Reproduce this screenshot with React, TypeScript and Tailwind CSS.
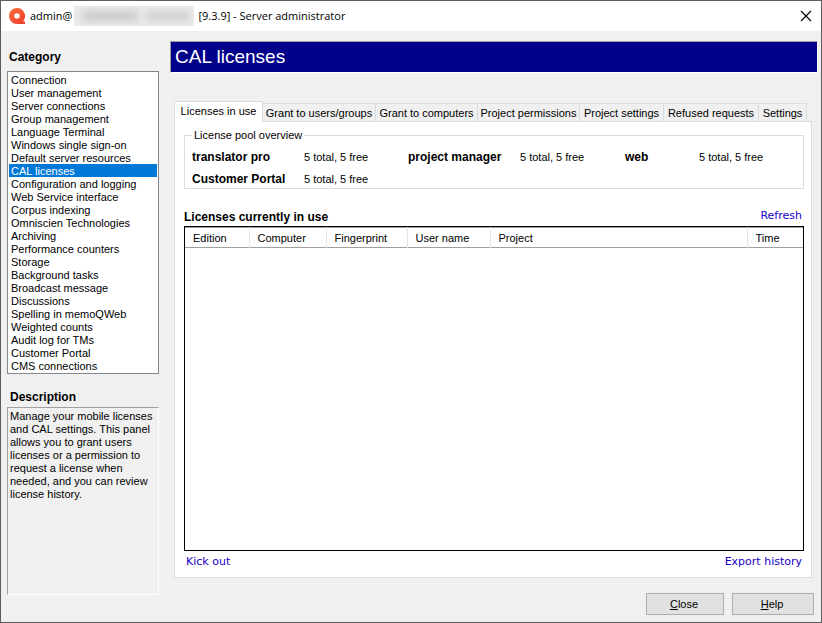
import { useState } from "react";

const CATEGORIES = [
  "Connection",
  "User management",
  "Server connections",
  "Group management",
  "Language Terminal",
  "Windows single sign-on",
  "Default server resources",
  "CAL licenses",
  "Configuration and logging",
  "Web Service interface",
  "Corpus indexing",
  "Omniscien Technologies",
  "Archiving",
  "Performance counters",
  "Storage",
  "Background tasks",
  "Broadcast message",
  "Discussions",
  "Spelling in memoQWeb",
  "Weighted counts",
  "Audit log for TMs",
  "Customer Portal",
  "CMS connections",
];

// width of each tab header
const TABS = [
  { label: "Licenses in use", width: "w-[89px]" },
  { label: "Grant to users/groups", width: "w-[113px]" },
  { label: "Grant to computers", width: "w-[102px]" },
  { label: "Project permissions", width: "w-[102px]" },
  { label: "Project settings", width: "w-[84px]" },
  { label: "Refused requests", width: "w-[95px]" },
  { label: "Settings", width: "w-[48px]" },
];

const COLUMNS = [
  { label: "Edition", width: "w-16" },
  { label: "Computer", width: "w-[77px]" },
  { label: "Fingerprint", width: "w-[81px]" },
  { label: "User name", width: "w-[83px]" },
  { label: "Project", width: "" },
  { label: "Time", width: "w-14" },
];

const POOL = [
  { name: "translator pro", usage: "5 total, 5 free" },
  { name: "project manager", usage: "5 total, 5 free" },
  { name: "web", usage: "5 total, 5 free" },
  { name: "Customer Portal", usage: "5 total, 5 free" },
];

function Logo() {
  return (
    <svg viewBox="0 0 16 16" className="size-4 shrink-0" aria-hidden="true">
      <defs>
        <linearGradient id="logo" x1="0" y1="0" x2="1" y2="1">
          <stop offset="0" stopColor="#f9703a" />
          <stop offset="1" stopColor="#ee3b2c" />
        </linearGradient>
      </defs>
      <path
        fill="url(#logo)"
        fillRule="evenodd"
        d="M8 0a8 8 0 1 0 0 16h8v-2.6h-2.1A8 8 0 0 0 8 0Zm0 5.2a2.7 2.7 0 1 1 0 5.4 2.7 2.7 0 0 1 0-5.4Z"
      />
    </svg>
  );
}

function TitleBar() {
  return (
    <header className="flex h-[30px] shrink-0 items-center bg-white pr-2 pl-2">
      <Logo />
      <h1 className="ml-[5px] flex items-center font-['Open_Sans','Noto_Sans',sans-serif] text-[11px] leading-4 whitespace-pre">
        admin@
        <span className="ml-0.5 flex h-5 w-[120px] items-center overflow-hidden bg-[#ececec]">
          <span className="ml-2 h-2.5 w-14 bg-[#c8c8c8] blur-[4px]" />
          <span className="ml-2 h-2.5 w-11 bg-[#cfcfcf] blur-[4px]" />
        </span>
        <span className="ml-1">[9.3.9] - Server administrator</span>
      </h1>
      <button type="button" aria-label="Close window" className="mr-px ml-auto">
        <svg viewBox="0 0 12 12" className="size-3" fill="none" stroke="#000" strokeWidth="1.1">
          <path d="M1 1l10 10M11 1L1 11" />
        </svg>
      </button>
    </header>
  );
}

function Sidebar({ current, onSelect }: { current: string; onSelect: (c: string) => void }) {
  return (
    <aside className="flex w-[152px] shrink-0 flex-col">
      <h2 id="category" className="mt-[18px] ml-0.5 text-xs leading-4 font-bold">
        Category
      </h2>
      <ul
        role="listbox"
        aria-labelledby="category"
        className="mt-1.5 border border-[#828790] bg-white p-px"
      >
        {CATEGORIES.map((c) => (
          <li key={c} role="option" aria-selected={c === current}>
            <button
              type="button"
              onClick={() => onSelect(c)}
              className={[
                "block h-[13px] w-full pt-0.5 pl-0.5 text-left leading-[11px] whitespace-nowrap",
                c === current ? "bg-[#0078d7] text-white" : "",
              ].join(" ")}
            >
              {c}
            </button>
          </li>
        ))}
      </ul>
      <h2 className="mt-[15px] ml-[3px] text-xs leading-4 font-bold">Description</h2>
      <p className="mt-0.5 flex-1 border border-t-[#a0a0a0] border-r-white border-b-white border-l-[#a0a0a0] px-0.5 pt-0.5">
        Manage your mobile licenses and CAL settings. This panel allows you to grant users licenses
        or a permission to request a license when needed, and you can review license history.
      </p>
    </aside>
  );
}

function LinkText({ children }: { children: string }) {
  return (
    <a href="#" className="font-['DejaVu_Sans',sans-serif] text-[11px] leading-4 text-[#1400c8]">
      {children}
    </a>
  );
}

function LicensesInUse() {
  return (
    <>
      <fieldset className="h-[60px] border border-[#dcdcdc] pl-[7px]">
        <legend className="px-0.5 leading-[13px]">License pool overview</legend>
        <dl className="grid grid-cols-[112px_104px_112px_105px_74px_1fr] gap-y-1.5 pt-[7px] leading-4 whitespace-nowrap">
          {POOL.map((p) => (
            <div key={p.name} className="contents">
              <dt className="text-xs leading-4 font-bold">{p.name}</dt>
              <dd>{p.usage}</dd>
            </div>
          ))}
        </dl>
      </fieldset>
      <div className="mt-[19px] flex items-start justify-between pr-0.5">
        <h3 className="mt-px text-xs leading-4 font-bold">Licenses currently in use</h3>
        <LinkText>Refresh</LinkText>
      </div>
      <div className="mt-px flex-1 border border-black">
        <table className="w-full table-fixed border-collapse">
          <thead>
            <tr className="h-5 border-t border-b border-[#a0a0a0]">
              {COLUMNS.map((c) => (
                <th
                  key={c.label}
                  scope="col"
                  className={`border-r border-[#e5e5e5] border-b-[#a0a0a0] pt-px pl-2 text-left font-normal last:border-r-0 ${c.width}`}
                >
                  {c.label}
                </th>
              ))}
            </tr>
          </thead>
          <tbody />
        </table>
      </div>
      <div className="mt-[3px] flex justify-between px-0.5">
        <LinkText>Kick out</LinkText>
        <LinkText>Export history</LinkText>
      </div>
    </>
  );
}

export default function App() {
  const [category, setCategory] = useState("CAL licenses");
  const [tab, setTab] = useState("Licenses in use");

  return (
    <div className="flex min-h-screen flex-col border border-[#5c5c5c] bg-[#f0f0f0] font-['Liberation_Sans',Arial,sans-serif] text-[11px] leading-[13px] text-black">
      <TitleBar />
      <div className="flex flex-1 gap-[11px] pr-[3px] pl-1.5">
        <div className="flex pb-[27px]">
          <Sidebar current={category} onSelect={setCategory} />
        </div>
        <main className="flex min-w-0 flex-1 flex-col pt-2.5">
          <h2 className="h-8 shrink-0 border border-t-[#a0a0a0] border-r-white border-b-white border-l-[#a0a0a0] bg-[#00008b] pl-1 text-[19px] leading-[30px] text-white">
            {category}
          </h2>
          <div className="mt-7 mr-1.5 ml-1 flex flex-1 flex-col">
            <div role="tablist" className="flex h-[21px] items-end">
              {TABS.map((t) => (
                <button
                  key={t.label}
                  type="button"
                  role="tab"
                  aria-selected={t.label === tab}
                  onClick={() => setTab(t.label)}
                  className={[
                    "border-t border-r border-[#dcdcdc] text-center whitespace-nowrap first:border-l",
                    t.width,
                    t.label === tab ? "h-[21px] bg-white pb-0.5" : "h-[19px] border-b pt-0.5",
                  ].join(" ")}
                >
                  {t.label}
                </button>
              ))}
              <div className="flex-1 border-b border-[#dcdcdc]" />
            </div>
            <div
              role="tabpanel"
              className="flex flex-1 flex-col border border-t-0 border-[#dcdcdc] bg-white pt-[7px] pr-[7px] pb-[7px] pl-[9px]"
            >
              <LicensesInUse />
            </div>
          </div>
          <div className="mt-[15px] mr-1 mb-[7px] flex justify-end gap-2">
            <button type="button" className="h-[22px] w-[78px] border border-[#adadad] bg-[#e1e1e1] pr-0.5">
              <span className="underline">C</span>lose
            </button>
            <button type="button" className="h-[22px] w-[82px] border border-[#adadad] bg-[#e1e1e1] pr-0.5">
              <span className="underline">H</span>elp
            </button>
          </div>
        </main>
      </div>
    </div>
  );
}
